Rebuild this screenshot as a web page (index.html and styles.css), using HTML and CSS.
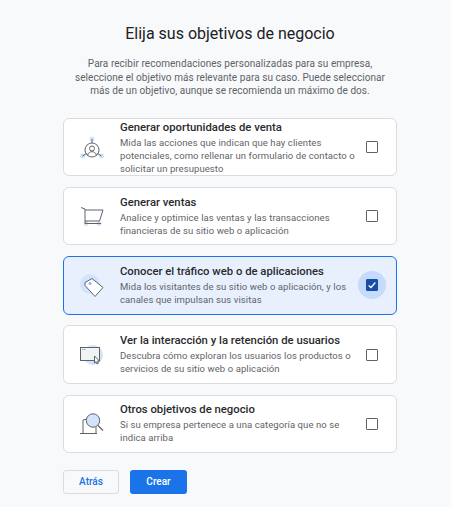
FILE: index.html
```html
<!DOCTYPE html>
<html lang="es">
<head>
    <meta charset="UTF-8">
    <meta name="viewport" content="width=device-width, initial-scale=1.0">
    <title>Elija sus objetivos de negocio</title>
    <link rel="stylesheet" href="styles.css">
</head>
<body>
    <div class="page">
        <h1>Elija sus objetivos de negocio</h1>
        <p class="intro">Para recibir recomendaciones personalizadas para su empresa, seleccione el objetivo más relevante para su caso. Puede seleccionar más de un objetivo, aunque se recomienda un máximo de dos.</p>

        <div class="cards">
            <div class="card card-top">
                <div class="icon">
                    <svg width="36" height="36" viewBox="0 0 36 36" fill="none" stroke="#5f6368" stroke-width="1">
                        <circle cx="18" cy="10" r="2.500" fill="#d2e3fc" stroke="none"/>
                        <circle cx="8.500" cy="27" r="2.500" fill="#d2e3fc" stroke="none"/>
                        <circle cx="27.500" cy="27" r="2.500" fill="#d2e3fc" stroke="none"/>
                        <circle cx="18" cy="21" r="7"/>
                        <circle cx="18" cy="19.500" r="2.500"/>
                        <path d="M13.500 26.500c.8-3 2.500-3.800 4.500-3.800s3.700.8 4.500 3.800"/>
                        <path d="M18 10v4M8.500 27l4-2.500M27.500 27l-4-2.500"/>
                    </svg>
                </div>
                <div class="text">
                    <h2>Generar oportunidades de venta</h2>
                    <p>Mida las acciones que indican que hay clientes potenciales, como rellenar un formulario de contacto o solicitar un presupuesto</p>
                </div>
                <div class="check-wrap"><span class="check"></span></div>
            </div>

            <div class="card">
                <div class="icon">
                    <svg width="36" height="36" viewBox="0 0 36 36" fill="none" stroke="#5f6368" stroke-width="1">
                        <circle cx="12" cy="25.500" r="2.500" fill="#d2e3fc" stroke="none"/>
                        <circle cx="25" cy="25.500" r="2.500" fill="#d2e3fc" stroke="none"/>
                        <path d="M7 9.500 11 11v14.500h16"/>
                        <path d="M11 12h18l-3.500 11H11"/>
                    </svg>
                </div>
                <div class="text">
                    <h2>Generar ventas</h2>
                    <p>Analice y optimice las ventas y las transacciones financieras de su sitio web o aplicación</p>
                </div>
                <div class="check-wrap"><span class="check"></span></div>
            </div>

            <div class="card selected">
                <div class="icon">
                    <svg width="36" height="36" viewBox="0 0 36 36" fill="none" stroke="#5f6368" stroke-width="1">
                        <circle cx="16" cy="17" r="10" fill="#d2e3fc" stroke="none"/>
                        <path d="M11 15.500 18 11.500 29 20.500 21 29.500 11 18.500z" fill="#fff"/>
                        <circle cx="16" cy="16.500" r="1.500" fill="#8ab4f8" stroke="none"/>
                    </svg>
                </div>
                <div class="text">
                    <h2>Conocer el tráfico web o de aplicaciones</h2>
                    <p>Mida los visitantes de su sitio web o aplicación, y los canales que impulsan sus visitas</p>
                </div>
                <div class="check-wrap">
                    <span class="check">
                        <svg width="12" height="12" viewBox="0 0 12 12" fill="none" stroke="#fff" stroke-width="1.500">
                            <path d="M2 6.500 4.800 9 10 3"/>
                        </svg>
                    </span>
                </div>
            </div>

            <div class="card">
                <div class="icon">
                    <svg width="36" height="36" viewBox="0 0 36 36" fill="none" stroke="#5f6368" stroke-width="1">
                        <circle cx="19" cy="18" r="10" fill="#d2e3fc" stroke="none"/>
                        <rect x="6.500" y="10.500" width="19" height="13" fill="#f1f3f4"/>
                        <path d="M8.500 12.500h.8M10.500 12.500h.8"/>
                        <path d="M20.500 19v7l1.500-1.300 1 2.300 1.300-.6-1-2.200h2.200z" fill="#fff"/>
                    </svg>
                </div>
                <div class="text">
                    <h2>Ver la interacción y la retención de usuarios</h2>
                    <p>Descubra cómo exploran los usuarios los productos o servicios de su sitio web o aplicación</p>
                </div>
                <div class="check-wrap"><span class="check"></span></div>
            </div>

            <div class="card">
                <div class="icon">
                    <svg width="36" height="36" viewBox="0 0 36 36" fill="none" stroke="#5f6368" stroke-width="1">
                        <path d="M6 27.500h17"/>
                        <path d="M9 27.500V14l4-1M22 21v6.500"/>
                        <circle cx="19" cy="14.500" r="6.700" fill="#d2e3fc"/>
                        <path d="M24 19.500 29 24.500" stroke-width="1.300"/>
                    </svg>
                </div>
                <div class="text">
                    <h2>Otros objetivos de negocio</h2>
                    <p>Si su empresa pertenece a una categoría que no se indica arriba</p>
                </div>
                <div class="check-wrap"><span class="check"></span></div>
            </div>
        </div>

        <div class="actions">
            <button class="btn btn-back">Atrás</button>
            <button class="btn btn-create">Crear</button>
        </div>
    </div>
</body>
</html>
```

FILE: styles.css
```css
* {
    margin: 0;
    padding: 0;
    box-sizing: border-box;
}

body {
    font-family: Roboto, "Liberation Sans", sans-serif;
    background: #f8f9fa;
    color: #202124;
    width: 451px;
    height: 507px;
    overflow: hidden;
}

.page {
    padding: 22px 54px 0 63px;
}

h1 {
    font-size: 16px;
    font-weight: 400;
    line-height: 24px;
    text-align: center;
}

.intro {
    margin: 11px 6px 0;
    font-size: 10px;
    line-height: 13.500px;
    letter-spacing: 0.05px;
    color: #5f6368;
    text-align: center;
}

.cards {
    display: flex;
    flex-direction: column;
    gap: 10.750px;
    margin-top: 20px;
}

.card {
    display: flex;
    align-items: center;
    height: 58.500px;
    background: #fff;
    border: 1px solid #dadce0;
    border-radius: 6px;
    padding-left: 10px;
}

.card-top .text {
    margin-top: 3px;
}

.selected {
    background: #e8f0fe;
    border-color: #1a73e8;
}

.icon {
    width: 36px;
    height: 36px;
    flex-shrink: 0;
}

.text {
    width: 238px;
    margin-left: 10px;
}

.text h2 {
    font-size: 11.300px;
    font-weight: 500;
    line-height: 14px;
    margin-bottom: 1px;
    color: #292a2d;
}

.text p {
    font-size: 9.500px;
    line-height: 13px;
    letter-spacing: 0.08px;
    color: #5f6368;
}

.check-wrap {
    width: 28px;
    height: 28px;
    display: flex;
    align-items: center;
    justify-content: center;
    border-radius: 50%;
}

.selected .check-wrap {
    background: #c6dafc;
}

.check {
    width: 12px;
    height: 12px;
    border: 1px solid #5f6368;
    border-radius: 1px;
    display: flex;
    align-items: center;
    justify-content: center;
}

.selected .check {
    background: #174ea6;
    border-color: #174ea6;
}

.actions {
    display: flex;
    gap: 11px;
    margin-top: 16.500px;
}

.btn {
    height: 24px;
    font-family: inherit;
    font-size: 10px;
    font-weight: 500;
    border-radius: 3px;
}

.btn-back {
    width: 56px;
    background: #f8f9fa;
    border: 1px solid #dadce0;
    color: #1a73e8;
}

.btn-create {
    width: 57px;
    background: #1a73e8;
    border: none;
    color: #fff;
}
```
